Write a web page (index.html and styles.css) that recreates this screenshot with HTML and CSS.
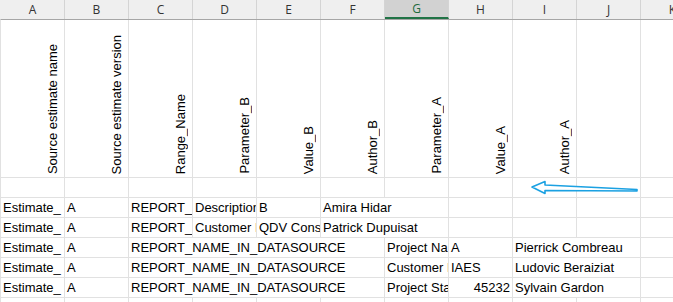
FILE: index.html
```html
<!DOCTYPE html>
<html lang="en">
<head>
    <meta charset="UTF-8">
    <meta name="viewport" content="width=device-width, initial-scale=1.0">
    <title>Sheet1</title>
    <link rel="stylesheet" href="styles.css">
</head>
<body>

    <div class="sheet">
        <div class="row head">
            <div class="ch">A</div>
            <div class="ch">B</div>
            <div class="ch">C</div>
            <div class="ch">D</div>
            <div class="ch">E</div>
            <div class="ch">F</div>
            <div class="ch selected">G</div>
            <div class="ch">H</div>
            <div class="ch">I</div>
            <div class="ch">J</div>
            <div class="ch">K</div>
        </div>

        <div class="row tall">
            <div class="c vt"><span>Source estimate name</span></div>
            <div class="c vt"><span>Source estimate version</span></div>
            <div class="c vt"><span>Range_Name</span></div>
            <div class="c vt"><span>Parameter_B</span></div>
            <div class="c vt"><span>Value_B</span></div>
            <div class="c vt"><span>Author_B</span></div>
            <div class="c vt"><span>Parameter_A</span></div>
            <div class="c vt"><span>Value_A</span></div>
            <div class="c vt"><span>Author_A</span></div>
            <div class="c"></div>
            <div class="c"></div>
        </div>

        <div class="row">
            <div class="c"></div><div class="c"></div><div class="c"></div><div class="c"></div>
            <div class="c"></div><div class="c"></div><div class="c"></div><div class="c"></div>
            <div class="c"></div><div class="c"></div><div class="c"></div>
        </div>

        <div class="row">
            <div class="c">Estimate_</div>
            <div class="c">A</div>
            <div class="c">REPORT_NAME_IN_DATASOURCE</div>
            <div class="c">Description</div>
            <div class="c">B</div>
            <div class="c span2">Amira Hidar</div>
            <div class="c"></div><div class="c"></div><div class="c"></div><div class="c"></div>
        </div>

        <div class="row">
            <div class="c">Estimate_</div>
            <div class="c">A</div>
            <div class="c">REPORT_NAME_IN_DATASOURCE</div>
            <div class="c">Customer Name</div>
            <div class="c">QDV Consultant</div>
            <div class="c span2">Patrick Dupuisat</div>
            <div class="c"></div><div class="c"></div><div class="c"></div><div class="c"></div>
        </div>

        <div class="row">
            <div class="c">Estimate_</div>
            <div class="c">A</div>
            <div class="c span4">REPORT_NAME_IN_DATASOURCE</div>
            <div class="c">Project Name</div>
            <div class="c">A</div>
            <div class="c span2">Pierrick Combreau</div>
            <div class="c"></div>
        </div>

        <div class="row">
            <div class="c">Estimate_</div>
            <div class="c">A</div>
            <div class="c span4">REPORT_NAME_IN_DATASOURCE</div>
            <div class="c">Customer Name</div>
            <div class="c">IAES</div>
            <div class="c span2">Ludovic Beraiziat</div>
            <div class="c"></div>
        </div>

        <div class="row">
            <div class="c">Estimate_</div>
            <div class="c">A</div>
            <div class="c span4">REPORT_NAME_IN_DATASOURCE</div>
            <div class="c">Project Start</div>
            <div class="c num">45232</div>
            <div class="c span2">Sylvain Gardon</div>
            <div class="c"></div>
        </div>

        <div class="row">
            <div class="c"></div><div class="c"></div><div class="c"></div><div class="c"></div>
            <div class="c"></div><div class="c"></div><div class="c"></div><div class="c"></div>
            <div class="c"></div><div class="c"></div><div class="c"></div>
        </div>
    </div>

    <!-- hand drawn arrow over the sheet -->
    <svg class="arrow" width="120" height="20" viewBox="0 0 120 20">
        <polygon points="2,10 15,4.5 15,8 107,12.5 107,14 15,13.5 15,16.5"
                 fill="#ffffff" stroke="#1ba1e2" stroke-width="1.6" stroke-linejoin="round"/>
    </svg>

</body>
</html>
```

FILE: styles.css
```css
* {
    margin: 0;
    padding: 0;
    box-sizing: border-box;
}

body {
    background: #fff;
    overflow: hidden;
    width: 673px;
    height: 302px;
    position: relative;
    font-family: 'Liberation Sans', Arial, sans-serif;
    font-size: 13px;
    color: #000;
}

.sheet {
    width: 705px;
}

.row {
    display: grid;
    grid-template-columns: repeat(11, 64px);
    height: 20px;
    border-left: 1px solid #e1e1e1;
}

/* column headers */
.head {
    background: #efefef;
    border-left-color: #efefef;
    border-bottom: 1px solid #a6a6a6;
}

.ch {
    font-family: 'Open Sans', 'Noto Sans', sans-serif;
    font-size: 12px;
    line-height: 19px;
    text-align: center;
    color: #333;
    border-right: 1px solid #d4d4d4;
}

.ch.selected {
    background: #d2d2d2;
    color: #1e6b3e;
    border-bottom: 2px solid #217346;
    line-height: 17px;
}

/* cells */
.c {
    border-right: 1px solid #e1e1e1;
    border-bottom: 1px solid #e1e1e1;
    padding: 0 2px;
    line-height: 19px;
    white-space: nowrap;
    overflow: hidden;
}

.span2 {
    grid-column: span 2;
}

.span4 {
    grid-column: span 4;
}

.num {
    text-align: right;
}

.tall {
    height: 158px;
}

.vt {
    display: flex;
    justify-content: flex-end;
    align-items: flex-end;
    padding: 0 4px 3px 0;
}

.vt span {
    writing-mode: vertical-rl;
    transform: rotate(180deg);
    line-height: 15px;
}

.arrow {
    position: absolute;
    left: 530px;
    top: 177px;
}
```
